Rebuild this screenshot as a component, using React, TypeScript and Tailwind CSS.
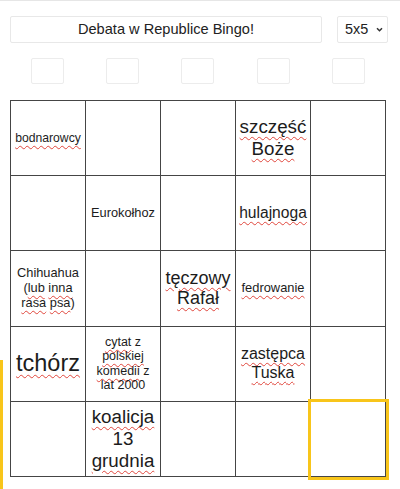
import React from "react";

type Cell = { text: string; size: string; ok?: string[] };

const cells: Cell[] = [
  { text: "bodnarowcy", size: "text-[12.2px]" },
  { text: "", size: "" },
  { text: "", size: "" },
  { text: "szczęść Boże", size: "text-[18.8px]" },
  { text: "", size: "" },

  { text: "", size: "" },
  { text: "Eurokołhoz", size: "text-[12.8px]", ok: ["Eurokołhoz"] },
  { text: "", size: "" },
  { text: "hulajnoga", size: "text-[15.6px]" },
  { text: "", size: "" },

  { text: "Chihuahua (lub inna rasa psa)", size: "text-[12.8px]", ok: ["Chihuahua"] },
  { text: "", size: "" },
  { text: "tęczowy Rafał", size: "text-[18px]" },
  { text: "fedrowanie", size: "text-[12.9px]" },
  { text: "", size: "" },

  { text: "tchórz", size: "text-[23.5px]" },
  { text: "cytat z polskiej komedii z lat 2000", size: "text-[12.5px]", ok: ["z", "lat", "2000"] },
  { text: "", size: "" },
  { text: "zastępca Tuska", size: "text-[16px]" },
  { text: "", size: "" },

  { text: "", size: "" },
  { text: "koalicja 13 grudnia", size: "text-[18.8px]", ok: ["13"] },
  { text: "", size: "" },
  { text: "", size: "" },
  { text: "", size: "" },
];

const Word = ({ word, ok }: { word: string; ok: boolean }) => {
  const m = word.match(/^([(]?)(.*?)([)]?)$/);
  const pre = m ? m[1] : "";
  const core = m ? m[2] : word;
  const post = m ? m[3] : "";
  if (ok) return <span>{word}</span>;
  return (
    <span>
      {pre}
      <span className="underline decoration-wavy decoration-[#e0463c] decoration-1 underline-offset-[3px]">{core}</span>
      {post}
    </span>
  );
};

const CellText = ({ cell }: { cell: Cell }) => {
  const words = cell.text.split(" ");
  return (
    <div className={`${cell.size} leading-[1.15] text-center text-[#1c1c1c]`}>
      {words.map((w, i) => (
        <React.Fragment key={i}>
          {i > 0 && " "}
          <Word word={w} ok={(cell.ok ?? []).includes(w.replace(/[()]/g, ""))} />
        </React.Fragment>
      ))}
    </div>
  );
};

export default function App() {
  return (
    <div
      className="relative w-[400px] h-[489px] overflow-hidden bg-white border-t border-[#e6e6e6]"
      style={{ fontFamily: '"Liberation Sans", Arial, sans-serif' }}
    >
      <div className="px-[10px] pt-[15px]">
        <div className="flex items-center">
          <div className="w-[312px] h-[27px] flex items-center justify-center border border-[#e8e8e8] rounded-[2px] text-[14.6px] text-[#222]">
            Debata w Republice Bingo!
          </div>
          <div className="ml-[15px] w-[51px] h-[27px] flex items-center border border-[#e8e8e8] rounded-[2px] pl-[7px] text-[14.4px] text-[#222]">
            <span>5x5</span>
            <svg className="ml-[8px]" width="7" height="5" viewBox="0 0 7 5" fill="none">
              <path d="M1 1.2 L3.5 3.7 L6 1.2" stroke="#333" strokeWidth="1.5" />
            </svg>
          </div>
        </div>

        <div className="grid grid-cols-5 w-[376px] mt-[15px]">
          {[0, 1, 2, 3, 4].map((i) => (
            <div key={i} className="flex justify-center">
              <div className="w-[33px] h-[26px] border border-[#ececec] rounded-[2px]" />
            </div>
          ))}
        </div>

        <div className="grid grid-cols-5 grid-rows-5 w-[376px] h-[377px] mt-[16px] border-l border-t border-[#454545]">
          {cells.map((c, i) => (
            <div
              key={i}
              className={`flex items-center justify-center px-[3px] border-r border-b border-[#454545] ${
                i === 24 ? "relative outline-3 outline-[#f8c51a]" : ""
              }`}
            >
              {c.text && <CellText cell={c} />}
            </div>
          ))}
        </div>
      </div>

      <div className="absolute left-0 top-[359px] w-[3px] h-[130px] bg-[#f8c51a]" />
    </div>
  );
}
